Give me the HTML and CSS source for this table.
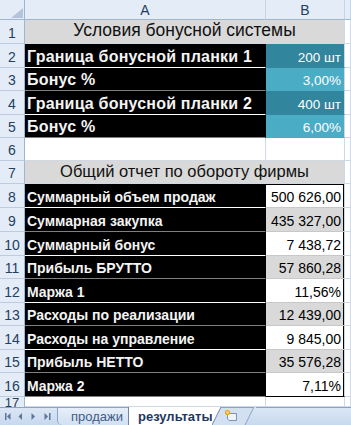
FILE: index.html
```html
<!DOCTYPE html>
<html lang="ru">
<head>
<meta charset="utf-8">
<title>Бонусы</title>
<link rel="stylesheet" href="styles.css">
</head>
<body>
<div class="app">
  <div class="sheet">
    <div class="c corner"><svg width="12" height="10" viewBox="0 0 12 10"><polygon points="12,0 12,10 0,10" fill="#b3c4da"/></svg></div>
    <div class="c ch">A</div>
    <div class="c ch">B</div>
    <div class="c ch"></div>

    <div class="c rh">1</div>
    <div class="c title">Условия бонусной системы</div>
    <div class="c"></div>

    <div class="c rh">2</div>
    <div class="c lab big w">Граница бонусной планки 1</div>
    <div class="c val v1">200 шт</div>
    <div class="c"></div>

    <div class="c rh">3</div>
    <div class="c lab big g">Бонус %</div>
    <div class="c val v2">3,00%</div>
    <div class="c"></div>

    <div class="c rh">4</div>
    <div class="c lab big w">Граница бонусной планки 2</div>
    <div class="c val v1">400 шт</div>
    <div class="c"></div>

    <div class="c rh">5</div>
    <div class="c lab big g">Бонус %</div>
    <div class="c val v2">6,00%</div>
    <div class="c"></div>

    <div class="c rh">6</div>
    <div class="c"></div>
    <div class="c"></div>
    <div class="c"></div>

    <div class="c rh">7</div>
    <div class="c title narrow">Общий отчет по обороту фирмы</div>
    <div class="c"></div>

    <div class="c rh">8</div>
    <div class="c lab w">Суммарный объем продаж</div>
    <div class="c num top">500 626,00</div>
    <div class="c"></div>

    <div class="c rh">9</div>
    <div class="c lab g">Суммарная закупка</div>
    <div class="c num gr">435 327,00</div>
    <div class="c"></div>

    <div class="c rh">10</div>
    <div class="c lab w">Суммарный бонус</div>
    <div class="c num">7 438,72</div>
    <div class="c"></div>

    <div class="c rh">11</div>
    <div class="c lab g">Прибыль БРУТТО</div>
    <div class="c num gr">57 860,28</div>
    <div class="c"></div>

    <div class="c rh">12</div>
    <div class="c lab w">Маржа 1</div>
    <div class="c num">11,56%</div>
    <div class="c"></div>

    <div class="c rh">13</div>
    <div class="c lab g">Расходы по реализации</div>
    <div class="c num gr">12 439,00</div>
    <div class="c"></div>

    <div class="c rh">14</div>
    <div class="c lab w">Расходы на управление</div>
    <div class="c num">9 845,00</div>
    <div class="c"></div>

    <div class="c rh">15</div>
    <div class="c lab g">Прибыль НЕТТО</div>
    <div class="c num gr">35 576,28</div>
    <div class="c"></div>

    <div class="c rh">16</div>
    <div class="c lab g">Маржа 2</div>
    <div class="c num bot">7,11%</div>
    <div class="c"></div>

    <div class="c rh last">17</div>
    <div class="c"></div>
    <div class="c"></div>
    <div class="c"></div>
  </div>

  <div class="tabbar">
    <div class="nav">
      <svg width="56" height="17" viewBox="0 0 56 17">
        <g fill="#5d7597">
          <rect x="5" y="5" width="1.5" height="7"/>
          <polygon points="7,8.5 10.5,5 10.5,12"/>
          <polygon points="18.5,8.5 22,5 22,12"/>
          <polygon points="35,8.5 31.5,5 31.5,12"/>
          <polygon points="48,8.5 44.5,5 44.5,12"/>
          <rect x="49" y="5" width="1.5" height="7"/>
        </g>
      </svg>
    </div>
    <div class="tab inactive">продажи</div>
    <div class="tab active">
      <span class="lbl">результаты</span>
      <svg class="slant" width="44" height="18" viewBox="0 0 44 18">
        <polygon points="0,0 9,0 0,18" fill="#ffffff"/>
        <polygon points="9,0 42,0 33,18 0,18" fill="#d3e0f1"/>
        <line x1="0" y1="18" x2="9" y2="0" stroke="#6f86a8" stroke-width="1"/>
        <line x1="9" y1="0.5" x2="42" y2="0.5" stroke="#8ba3c7" stroke-width="1"/>
        <line x1="33" y1="18" x2="42" y2="0" stroke="#8ba3c7" stroke-width="1"/>
        <path d="M15.5 6.5 H24.5 V13.5 H17 L15.5 12 Z" fill="#eef3fa" stroke="#7d93b3" stroke-width="1"/>
        <circle cx="15.5" cy="5.5" r="2.6" fill="#f4a21c"/>
        <circle cx="15.5" cy="5.5" r="1.2" fill="#ffe38a"/>
      </svg>
    </div>
    <div class="rest"></div>
  </div>
</div>
</body>
</html>
```

FILE: styles.css
```css
html, body {
  margin: 0;
  padding: 0;
  background: #ffffff;
}

body {
  width: 351px;
  height: 425px;
  overflow: hidden;
  font-family: "Liberation Sans", Arial, sans-serif;
}

.app {
  display: flex;
  flex-direction: column;
  height: 425px;
}

.sheet {
  flex: 0 0 407px;
  overflow: hidden;
  display: grid;
  grid-template-columns: 25px 241px 79px 1fr;
  grid-template-rows: 20px 24px 24px 23px 24px 23px 23px 23px 24px 24px 24px 23px 24px 23px 24px 23px 24px 10px;
}

.c {
  box-sizing: border-box;
  border-right: 1px solid #d0d7e5;
  border-bottom: 1px solid #d0d7e5;
  display: flex;
  align-items: flex-end;
  white-space: nowrap;
  overflow: hidden;
  min-width: 0;
}

.corner {
  background: #e4ecf7;
  border-right-color: #9eb6ce;
  border-bottom-color: #9eb6ce;
  justify-content: flex-end;
  padding: 0 1px 1px 0;
}

.ch {
  background: #e4ecf7;
  border-right-color: #c6d4e6;
  border-bottom-color: #9eb6ce;
  justify-content: center;
  align-items: center;
  color: #25405f;
  font-size: 14px;
}

.rh {
  background: #e4ecf7;
  border-right-color: #9eb6ce;
  border-bottom-color: #bccbe0;
  justify-content: center;
  color: #25405f;
  font-size: 14px;
  padding-bottom: 2px;
}

.rh.last {
  border-bottom: 0;
  padding: 1px 0 0;
  align-items: flex-start;
  font-size: 13px;
  line-height: 10px;
  overflow: visible;
}

.title {
  grid-column: span 2;
  background: #d9d9d9;
  justify-content: center;
  font-size: 17.5px;
  color: #111111;
  padding-bottom: 2px;
}

.title.narrow {
  font-size: 16.5px;
}

.lab {
  background: #000000;
  color: #f4f4f4;
  font-weight: bold;
  font-size: 14px;
  padding: 0 0 2px 2px;
  border-right-color: #000000;
}

.lab.big {
  font-size: 16px;
  letter-spacing: 0.2px;
  padding-bottom: 1px;
}

.lab.w {
  border-bottom-color: #ffffff;
}

.lab.g {
  border-bottom-color: #7f7f7f;
}

.val {
  justify-content: flex-end;
  color: #ffffff;
  font-size: 13.5px;
  padding: 0 3px 2px 0;
}

.v1 {
  background: #31859c;
  border-bottom-color: #31859c;
}

.v2 {
  background: #4bacc6;
  border-bottom-color: #4bacc6;
}

.num {
  justify-content: flex-end;
  color: #000000;
  font-size: 14px;
  padding: 0 3px 2px 0;
  background: #ffffff;
  box-shadow: inset -1px 0 0 #000000;
  border-bottom-color: #c8c8c8;
}

.num.gr {
  background: #d9d9d9;
}

.num.top {
  box-shadow: inset -1px 0 0 #000000, inset 0 1px 0 #000000;
}

.num.bot {
  border-bottom-color: #000000;
}

.tabbar {
  flex: 0 0 18px;
  display: flex;
  background: linear-gradient(#dce7f5, #c7d8ee);
}

.nav {
  box-sizing: border-box;
  width: 57px;
  height: 18px;
  border-top: 1px solid #8ba3c7;
  display: flex;
}

.tab {
  box-sizing: border-box;
  height: 18px;
  display: flex;
  align-items: center;
  font-size: 13px;
}

.inactive {
  width: 71px;
  padding-left: 13px;
  color: #3f5c85;
  background: linear-gradient(#e6eef9, #d2e0f1);
  border-top: 1px solid #8ba3c7;
  border-left: 1px solid #8ba3c7;
  border-radius: 0 0 0 5px;
}

.active {
  align-items: stretch;
}

.active .lbl {
  display: flex;
  align-items: center;
  background: #ffffff;
  padding-left: 9px;
  width: 84px;
  box-sizing: border-box;
  font-weight: bold;
  color: #1e3862;
  border-left: 1px solid #6f86a8;
}

.slant {
  display: block;
}

.rest {
  flex: 1;
  border-top: 1px solid #8ba3c7;
}
```
